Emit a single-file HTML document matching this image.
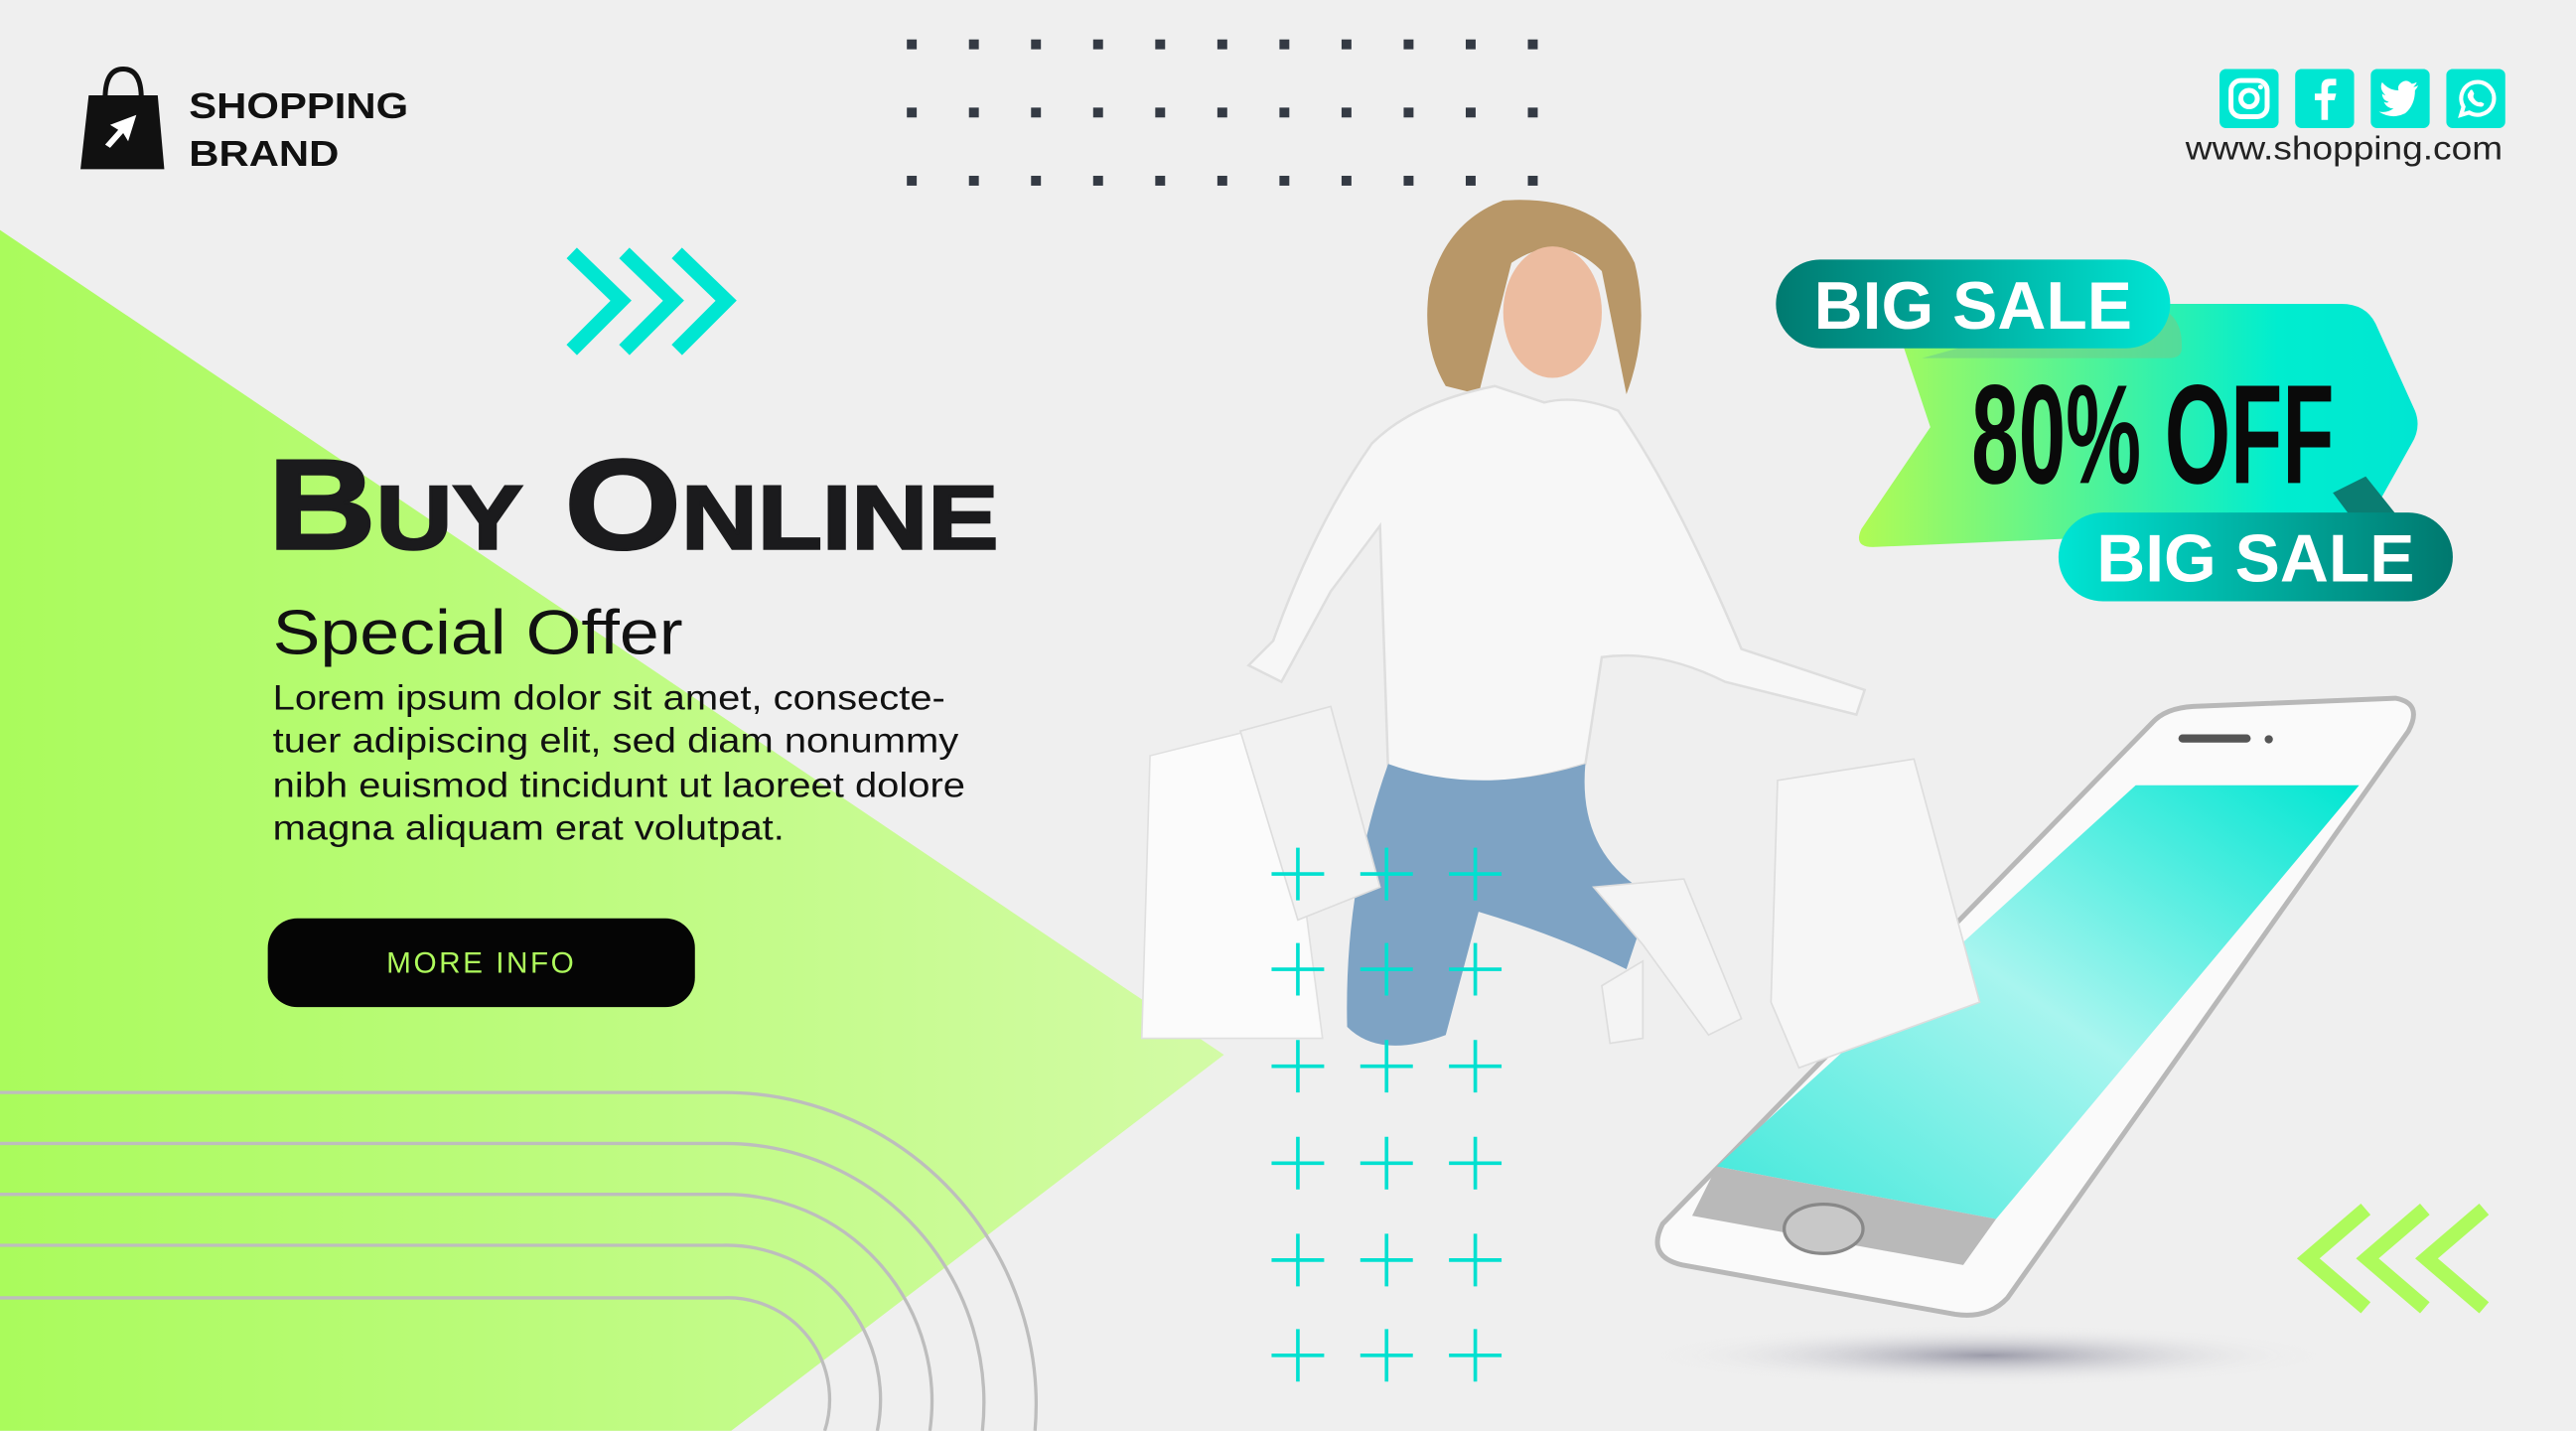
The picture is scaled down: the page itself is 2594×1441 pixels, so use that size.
<!DOCTYPE html>
<html><head><meta charset="utf-8"><style>
html,body{margin:0;padding:0;width:2594px;height:1441px;overflow:hidden;background:#efefef}
#stage{position:absolute;left:0;top:0;width:1568px;height:871px;transform:scale(1.65434);transform-origin:0 0;font-family:"Liberation Sans",sans-serif}
.abs{position:absolute}
</style></head><body><div id="stage">
<svg class="abs" style="left:0;top:0" width="1568" height="871" viewBox="0 0 1568 871">
<defs>
<linearGradient id="g1" x1="0" x2="1"><stop offset="0" stop-color="#aafb5c"/><stop offset="1" stop-color="#d3fba6"/></linearGradient>
<linearGradient id="pillA" x1="0" x2="1"><stop offset="0" stop-color="#007a70"/><stop offset="1" stop-color="#00e5d4"/></linearGradient>
<linearGradient id="pillB" x1="0" x2="1"><stop offset="0" stop-color="#00e5d4"/><stop offset="1" stop-color="#00786e"/></linearGradient>
<linearGradient id="arr" x1="0" x2="1"><stop offset="0" stop-color="#b0fb55"/><stop offset="0.75" stop-color="#00edcf"/><stop offset="1" stop-color="#00e6d2"/></linearGradient>
<linearGradient id="scr" x1="1" y1="0" x2="0" y2="1"><stop offset="0" stop-color="#00e6d2"/><stop offset="0.5" stop-color="#a8f5ef"/><stop offset="1" stop-color="#3fe8da"/></linearGradient>
<radialGradient id="sh"><stop offset="0" stop-color="#9a9aa8"/><stop offset="1" stop-color="#efefef" stop-opacity="0"/></radialGradient>
</defs>
<polygon points="0,140 745,642 445,871 0,871" fill="url(#g1)"/>
<g fill="none" stroke="#bdbdbd" stroke-width="2">
<path d="M0,665 H440 A190,190 0 0 1 630,871"/>
<path d="M0,696 H440 A158,158 0 0 1 598,871"/>
<path d="M0,727 H440 A126,126 0 0 1 566,871"/>
<path d="M0,758 H440 A94,94 0 0 1 534,871"/>
<path d="M0,790 H440 A62,62 0 0 1 502,871"/>
</g>
<g fill="#343a44" id="dots"></g>
<g fill="none" stroke="#00e6d2" stroke-width="9">
<path d="M348,154 L378,183 L348,213"/><path d="M380,154 L410,183 L380,213"/><path d="M412,154 L442,183 L412,213"/>
</g>
<g fill="none" stroke="#aefb5c" stroke-width="9">
<path d="M1440,736 L1405,766 L1440,796"/><path d="M1476,736 L1441,766 L1476,796"/><path d="M1512,736 L1477,766 L1512,796"/>
</g>
<path d="M54,58 H96 L100,103 H49 Z" fill="#111"/>
<path d="M64,60 Q64,42 75,42 Q86,42 86,60" fill="none" stroke="#111" stroke-width="3"/>
<path d="M83,70 L67,76 L72,79 L64,88 L67,90 L75,81 L78,86 Z" fill="#fff"/>
<ellipse cx="1210" cy="825" rx="200" ry="18" fill="url(#sh)"/>
<path d="M1335,430 L1458,425 Q1475,428 1466,445 L1222,790 Q1210,803 1190,800 L1024,770 Q1002,765 1012,745 L1310,440 Q1318,431 1335,430 Z" fill="#fafafa" stroke="#b8b8b8" stroke-width="3"/>
<path d="M1300,478 L1436,478 L1215,742 L1045,710 Z" fill="url(#scr)"/>
<path d="M1045,710 L1215,742 L1195,770 L1030,740 Z" fill="#b9b9b9"/>
<ellipse cx="1110" cy="748" rx="24" ry="15" fill="#c8c8c8" stroke="#888" stroke-width="2"/>
<rect x="1326" y="447" width="44" height="5" rx="2.5" fill="#555"/>
<circle cx="1381" cy="450" r="2.5" fill="#555"/>
<!-- woman (approx) -->
<path d="M915,122 Q880,135 870,175 Q865,210 880,235 L900,240 Q910,200 920,160 Q950,140 975,165 L990,240 Q1005,200 995,160 Q975,118 915,122 Z" fill="#b89768"/>
<ellipse cx="945" cy="190" rx="30" ry="40" fill="#ecbca0"/>
<path d="M910,235 Q860,245 835,270 Q800,320 775,390 L760,405 L780,415 L810,360 L840,320 L845,470 Q900,485 965,465 L975,400 Q1010,395 1050,415 L1130,435 L1135,420 L1060,395 Q1020,300 985,250 Q960,240 940,245 Z" fill="#f7f7f7" stroke="#dedede" stroke-width="1.5"/>
<path d="M845,465 Q818,540 820,625 Q840,645 880,630 L900,555 Q950,570 990,590 L1005,545 Q960,520 965,465 Q900,485 845,465 Z" fill="#7ea3c4"/>
<path d="M970,540 L1025,535 L1060,620 L1040,630 L1000,575 Z" fill="#f4f4f4" stroke="#ddd"/>
<path d="M1000,585 L975,600 L980,635 L1000,632 Z" fill="#f4f4f4" stroke="#ddd"/>
<path d="M700,460 L780,440 L805,632 L695,632 Z" fill="#fbfbfb" stroke="#e0e0e0"/>
<path d="M755,445 L810,430 L840,540 L790,560 Z" fill="#f2f2f2" stroke="#ddd"/>
<path d="M1082,475 L1165,462 L1205,610 L1095,650 L1078,610 Z" fill="#f6f6f6" stroke="#ddd"/>
<g stroke="#00e0d0" stroke-width="2.2" id="plus"></g>
</svg>
<script>
var d=document.getElementById('dots'),s='';
for(var r=0;r<3;r++)for(var c=0;c<11;c++){s+='<rect x="'+(552+c*37.8)+'" y="'+(24+r*41.5)+'" width="6" height="6"/>';}
d.innerHTML=s;
var p=document.getElementById('plus'),t='';
var xs=[790,844,898],ys=[532,590,649,708,767,825];
ys.forEach(function(y){xs.forEach(function(x){t+='<path d="M'+(x-16)+','+y+' H'+(x+16)+' M'+x+','+(y-16)+' V'+(y+16)+'"/>';});});
p.innerHTML=t;
</script>
<div class="abs" style="left:115px;top:50px;font-weight:bold;font-size:22px;line-height:29px;color:#111;transform:scaleX(1.15);transform-origin:0 0">SHOPPING<br>BRAND</div>
<div class="abs" style="left:1351px;top:42px;display:flex;gap:10px">
<svg width="36" height="36" viewBox="0 0 36 36"><rect width="36" height="36" rx="4" fill="#00e6d2"/><rect x="7" y="7" width="22" height="22" rx="6" fill="none" stroke="#fff" stroke-width="3"/><circle cx="18" cy="18" r="5" fill="none" stroke="#fff" stroke-width="3"/><circle cx="25" cy="11" r="1.5" fill="#fff"/></svg>
<svg width="36" height="36" viewBox="0 0 36 36"><rect width="36" height="36" rx="4" fill="#00e6d2"/><path d="M20,31 V19 H24 L25,15 H20 V12 Q20,10 22,10 H25 V6 H21 Q16,6 16,11 V15 H12 V19 H16 V31 Z" fill="#fff"/></svg>
<svg width="36" height="36" viewBox="0 0 36 36"><rect width="36" height="36" rx="4" fill="#00e6d2"/><path d="M29,10 Q27,11 26,11 Q28,9 28,8 Q26,9 25,9 Q22,6 19,8 Q16,10 17,13 Q11,13 7,8 Q5,12 9,16 Q8,16 7,15 Q7,19 11,20 Q10,21 8,20 Q10,24 14,24 Q10,27 5,26 Q13,31 21,27 Q27,22 27,13 Q28,12 29,10 Z" fill="#fff"/></svg>
<svg width="36" height="36" viewBox="0 0 36 36"><rect width="36" height="36" rx="4" fill="#00e6d2"/><path d="M9,28 L10.5,23 A10,10 0 1 1 14,26.5 Z" fill="none" stroke="#fff" stroke-width="2.5"/><path d="M14,14 Q15,12 16,13 L17,15 Q16,17 17,18 Q19,21 21,20 L23,21 Q23,23 21,23 Q17,23 14,19 Q12,16 14,14 Z" fill="#fff"/></svg>
</div>
<div class="abs" style="right:45px;top:80px;font-size:20px;color:#222;transform:scaleX(1.12);transform-origin:100% 0">www.shopping.com</div>
<div class="abs" style="left:163px;top:262px;font-weight:900;font-size:78px;font-variant:small-caps;color:#1b1b1d;line-height:90px;white-space:nowrap;transform:scaleX(1.17);transform-origin:0 0;-webkit-text-stroke:1.5px #1b1b1d">Buy Online</div>
<div class="abs" style="left:166px;top:362px;font-size:38px;color:#111;line-height:48px;transform:scaleX(1.14);transform-origin:0 0">Special Offer</div>
<div class="abs" style="left:166px;top:413px;font-size:21px;color:#111;line-height:26.3px;width:460px;white-space:nowrap;transform:scaleX(1.15);transform-origin:0 0">Lorem ipsum dolor sit amet, consecte-<br>tuer adipiscing elit, sed diam nonummy<br>nibh euismod tincidunt ut laoreet dolore<br>magna aliquam erat volutpat.</div>
<div class="abs" style="left:163px;top:559px;width:260px;height:54px;border-radius:18px;background:#050505;color:#aefb5c;font-size:18px;letter-spacing:1.5px;text-align:center;line-height:54px">MORE INFO</div>
<svg class="abs" style="left:1075px;top:150px" width="430" height="225" viewBox="1075 150 430 225">
<path d="M1150,185 L1425,185 Q1440,185 1446,197 L1470,250 Q1474,260 1468,270 L1440,320 L1140,333 Q1128,333 1133,322 L1175,260 Z" fill="url(#arr)"/>
<path d="M1290,185 H1300 Q1328,185 1328,210 V212 Q1328,218 1320,218 H1170 Z" fill="#6fcf8a" opacity="0.6"/>
<path d="M1440,290 L1480,340 L1450,340 L1420,300 Z" fill="#0a7d72"/>
<rect x="1081" y="158" width="240" height="54" rx="27" fill="url(#pillA)"/>
<rect x="1253" y="312" width="240" height="54" rx="27" fill="url(#pillB)"/>
</svg>
<div class="abs" style="left:1081px;top:158px;width:240px;height:54px;color:#fff;font-weight:bold;font-size:41px;line-height:56px;text-align:center">BIG SALE</div>
<div class="abs" style="left:1253px;top:312px;width:240px;height:54px;color:#fff;font-weight:bold;font-size:41px;line-height:56px;text-align:center">BIG SALE</div>
<div class="abs" style="left:1200px;top:222px;font-weight:bold;font-size:86px;line-height:86px;color:#0a0a0a;white-space:nowrap;transform:scaleX(0.6);transform-origin:0 0">80% OFF</div>
</div></body></html>
